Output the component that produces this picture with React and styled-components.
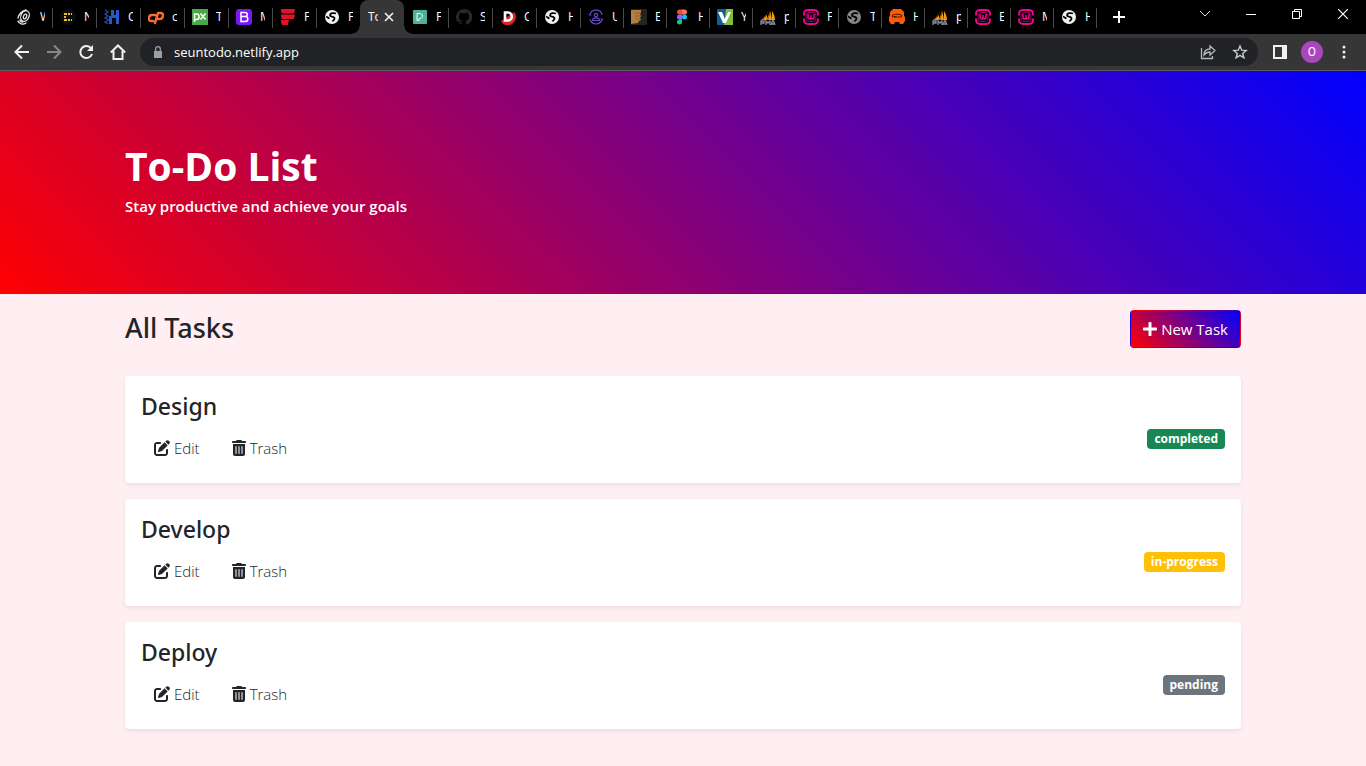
import React from "react";
import styled, { createGlobalStyle, css } from "styled-components";
import { FaPenToSquare, FaTrashCan } from "react-icons/fa6";
import { FaPlus } from "react-icons/fa";

const GlobalStyle = createGlobalStyle`
  *, *::before, *::after { box-sizing: border-box; }
  body {
    margin: 0;
    background: #ffeef2;
    color: #212529;
    font-family: "Segoe UI", "Open Sans", "Noto Sans", sans-serif;
    font-size: 16px;
    line-height: 24px;
  }
  button, input { font-family: inherit; }
  h1, h2, h3, p, ul { margin: 0; padding: 0; }
`;

const TabStrip = styled.div`
  display: flex;
  height: 34px;
  padding-left: 8px;
  background: #000;
`;

const Tab = styled.button`
  position: relative;
  display: flex;
  align-items: center;
  gap: 8px;
  flex: 0 0 ${(p) => (p.$narrow ? 43 : 44)}px;
  height: 34px;
  padding: 0 0 0 8px;
  border: 0;
  background: none;
  color: #fff;
  font-size: 12px;
  line-height: 16px;
  &::after {
    content: "";
    position: absolute;
    right: -1px;
    top: 8px;
    width: 1px;
    height: 20px;
    background: ${(p) => (p.$last ? "none" : "#4a4a4a")};
  }
  ${(p) =>
    p.$active &&
    css`
      z-index: 1;
      gap: 0;
      flex-basis: 44px;
      border-radius: 8px 8px 0 0;
      background: #363636;
      &::before,
      &::after {
        content: "";
        position: absolute;
        top: auto;
        bottom: 0;
        width: 8px;
        height: 8px;
      }
      &::before {
        left: -8px;
        background: radial-gradient(circle at 0 0, #000 7px, #363636 8px);
      }
      &::after {
        right: -8px;
        background: radial-gradient(circle at 100% 0, #000 7px, #363636 8px);
      }
    `}
`;

const TabText = styled.span`
  width: ${(p) => (p.$wide ? 10 : 5)}px;
  overflow: hidden;
  white-space: nowrap;
  text-align: left;
`;

const CloseIcon = styled.svg`
  margin-left: 6px;
`;

const Favicon = styled.svg`
  flex: none;
  width: 16px;
  height: 16px;
`;

const NewTab = styled.button`
  display: grid;
  place-items: center;
  width: 28px;
  margin-left: 9px;
  padding: 0;
  border: 0;
  background: none;
`;

const WindowControls = styled.div`
  display: flex;
  height: 28px;
  margin-left: auto;
`;

const WindowButton = styled.button`
  display: grid;
  place-items: center;
  width: 46px;
  padding: 0;
  border: 0;
  background: none;
`;

const Toolbar = styled.div`
  display: flex;
  align-items: center;
  height: 37px;
  padding: 0 6px;
  border-bottom: 1px solid #5c5c5c;
  background: #363636;
`;

const ToolButton = styled.button`
  display: grid;
  place-items: center;
  flex: none;
  width: 32px;
  height: 32px;
  padding: 0;
  border: 0;
  background: none;
`;

const AddressBar = styled.div`
  display: flex;
  align-items: center;
  flex: 1;
  height: 28px;
  margin: 0 6px;
  padding: 0 2px 0 12px;
  border-radius: 14px;
  background: #202225;
`;

const AddressInput = styled.input`
  flex: 1;
  min-width: 0;
  margin-left: 10px;
  padding: 0;
  border: 0;
  outline: 0;
  background: none;
  color: #fff;
  font-size: 13px;
  line-height: 20px;
`;

const Avatar = styled.span`
  display: grid;
  place-items: center;
  width: 22px;
  height: 22px;
  border-radius: 50%;
  background: #ab47bc;
  color: #fff;
  font-family: Roboto, sans-serif;
  font-size: 12px;
  line-height: 22px;
`;

const Container = styled.div`
  max-width: 1140px;
  margin: 0 auto;
  padding: 0 12px;
`;

const Hero = styled.header`
  padding: 71px 0 76px;
  background: linear-gradient(45deg, #f00, #00f);
  color: #fff;
`;

const HeroTitle = styled.h1`
  margin-bottom: 4px;
  font-size: 39px;
  font-weight: 700;
  line-height: 48px;
`;

const HeroText = styled.p`
  font-size: 15px;
  font-weight: 600;
  line-height: 24px;
`;

const SectionHead = styled.div`
  display: flex;
  justify-content: space-between;
  padding: 16px 0 28px;
`;

const SectionTitle = styled.h2`
  font-family: "Segoe UI", "Noto Sans", sans-serif;
  font-size: 27px;
  font-weight: 500;
  line-height: 36px;
`;

const Button = styled.button`
  display: inline-flex;
  align-items: center;
  gap: 4px;
  height: 38px;
  padding: 0 12px;
  border: 1px solid transparent;
  border-radius: 4px;
  background: none;
  color: #212529;
  font-size: 15px;
  font-weight: ${(p) => (p.$primary ? 400 : 300)};
  line-height: 24px;
  ${(p) =>
    p.$primary &&
    css`
      background: linear-gradient(45deg, #f00, #00f);
      color: #fff;
    `}
`;

const EditIcon = styled(FaPenToSquare)`
  width: 16px;
  height: 16px;
`;

const TrashIcon = styled(FaTrashCan)`
  width: 14px;
  height: 16px;
`;

const PlusIcon = styled(FaPlus)`
  width: 14px;
  height: 16px;
`;

const TaskList = styled.ul`
  display: flex;
  flex-direction: column;
  gap: 16px;
  padding-bottom: 16px;
  list-style: none;
`;

const TaskCard = styled.li`
  padding: 16px;
  border-radius: 4px;
  background: #fff;
  box-shadow: 0 2px 4px rgba(0, 0, 0, 0.075);
`;

const TaskName = styled.h3`
  margin-bottom: 8px;
  font-family: "Segoe UI", "Noto Sans", sans-serif;
  font-size: 23px;
  font-weight: 500;
  line-height: 29px;
`;

const TaskFooter = styled.div`
  display: flex;
  align-items: flex-start;
  justify-content: space-between;
`;

const Actions = styled.div`
  display: flex;
  gap: 6px;
`;

const badgeColors = {
  completed: "#198754",
  "in-progress": "#ffc107",
  pending: "#6c757d",
};

const Badge = styled.span`
  padding: 0 7px;
  border-radius: 4px;
  background: ${(p) => badgeColors[p.$status]};
  color: #fff;
  font-size: 12px;
  font-weight: 700;
  line-height: 20px;
`;

const globeMark = (
  <path
    d="M12 4.500C9.500 3.500 6 4.200 6 6.300S10.500 7 10.500 9.500C10.500 11 9 11.300 8.500 12.500M2 7.500c1.500.5 2 1.500 3.500 2"
    fill="none"
    stroke="#000"
    strokeWidth="1.800"
  />
);

const glyphs = {
  swirl: (
    <g fill="none" stroke="#e8e8e8" strokeWidth="1.300" strokeLinecap="round">
      <ellipse cx="9" cy="7" rx="4" ry="5.500" transform="rotate(25 9 7)" />
      <ellipse cx="9" cy="7.500" rx="1.500" ry="2.500" transform="rotate(25 9 7.500)" />
      <path d="M2 9c1-4 4-7 8-8M2 12c1 3 5 4 8 2M4 11c0 1 1 2 3 2" />
    </g>
  ),
  dots: (
    <>
      <circle cx="8" cy="8" r="8" fill="#0c0c0c" />
      <path d="M4 4h3v2H4zM8 4h2v2H8zM11 4h1v2h-1zM4 7h2v2H4zM4 10h3v2H4zM8 10h2v2H8zM11 10h1v2h-1z" fill="#f3ba2f" />
    </>
  ),
  hash: (
    <>
      <path d="M7 1h3v5h2V1h3v14h-3V9H8v6H5V7h2z" fill="#2858c8" />
      <path d="M1 1l3 2-3 2 3 2-3 2 4 2-4 2 3 2" fill="none" stroke="#2450a8" strokeWidth="1.3" />
    </>
  ),
  cpanel: (
    <g fill="none" stroke="#ff6c2c" strokeWidth="2.5" strokeLinecap="round" strokeLinejoin="round">
      <path d="M7 6H4C0 6-.5 12 3 12h2M7 14l3-10h3c3 0 2.500 6-1 6h-2" />
    </g>
  ),
  px: (
    <>
      <rect width="16" height="16" fill="#4aa84a" />
      <path d="M2.500 13V5h2c3.500 0 3.500 5.500 0 5.500h-2M8.500 4.500l5 6M13.500 4.500l-5 6" fill="none" stroke="#fff" strokeWidth="1.500" />
    </>
  ),
  bootstrap: (
    <>
      <rect width="16" height="16" rx="3" fill="#7b16f5" />
      <path d="M5 3.500h4c3 0 3 4 0 4H5zM5 7.500h4.500c3 0 3 5 0 5H5z" fill="none" stroke="#fff" strokeWidth="1.500" />
    </>
  ),
  bars: (
    <path d="M1 0h14l-1 4.500H3C1.500 4.500 1 3 1 0zM1 5.500h14l-1 4.500H3C1.500 10 1 9 1 5.500zM1 11h8l-1 5H3c-1.500 0-2-2-2-5z" fill="#e0122c" />
  ),
  globe: (
    <>
      <circle cx="8" cy="8" r="7" fill="#f1f3f4" />
      {globeMark}
    </>
  ),
  grayGlobe: (
    <>
      <circle cx="8" cy="8" r="7" fill="#858585" />
      {globeMark}
    </>
  ),
  teal: (
    <>
      <rect x="1" y="1" width="14" height="14" rx="1" fill="#4fb09c" />
      <path d="M5 4.500h2.500c4 0 4 5 0 5H7v2H5z" fill="none" stroke="#e8fff8" />
    </>
  ),
  github: (
    <path
      d="M8 0a8 8 0 0 0-2.500 15.600c.4.100.5-.2.500-.4V14c-2.200.5-2.700-1-2.700-1-.4-.9-.9-1.200-.9-1.200-.7-.5.1-.5.1-.5.800.1 1.200.8 1.200.8.700 1.200 1.900.9 2.300.7.100-.5.300-.9.500-1.100-1.800-.2-3.600-.9-3.600-4 0-.9.300-1.600.8-2.100-.1-.2-.4-1 .1-2.100 0 0 .7-.2 2.200.8a7.500 7.500 0 0 1 4 0c1.500-1 2.200-.8 2.200-.8.400 1.100.2 1.900.1 2.100.5.500.8 1.300.8 2.100 0 3.100-1.900 3.700-3.700 3.900.3.300.6.800.6 1.500v2.200c0 .2.100.5.500.4A8 8 0 0 0 8 0z"
      fill="#24292e"
    />
  ),
  redD: (
    <>
      <path d="M1 12l3-2 10-7c4 5 1 11-4 13-4 1-8-1-9-4z" fill="#dc2424" />
      <path d="M5 3.500h3c5 0 5 8 0 8H5z" fill="none" stroke="#fff" strokeWidth="2.600" />
    </>
  ),
  cycle: (
    <g fill="none" stroke="#6546c8" strokeWidth="1.200">
      <path d="M2 6C3-.5 13-.5 14 6M14 10.500c-2 6-10 6-12 0M.5 6h3M12.500 10h3" />
      <circle cx="8" cy="6" r="1.700" />
      <path d="M4.500 11.500c0-3.500 7-3.500 7 0z" />
    </g>
  ),
  fist: (
    <>
      <rect width="16" height="16" fill="#242424" />
      <path d="M0 1h10v3l-1 1 1 2-1 2 1 2-2 1-1 2-7 1z" fill="#b07f41" />
      <path d="M4 4h6M4 7h5M4 10h5" stroke="#795125" strokeWidth=".6" />
    </>
  ),
  figma: (
    <>
      <path d="M8 .5H5.500a2.500 2.500 0 0 0 0 5H8z" fill="#f24e1e" />
      <path d="M8 .5h2.500a2.500 2.500 0 0 1 0 5H8z" fill="#ff7262" />
      <path d="M8 5.500H5.500a2.500 2.500 0 0 0 0 5H8z" fill="#a259ff" />
      <circle cx="10.500" cy="8" r="2.500" fill="#1abcfe" />
      <path d="M8 10.500H5.500A2.500 2.500 0 1 0 8 13z" fill="#0acf83" />
    </>
  ),
  vee: (
    <>
      <path d="M0 0h16v16H0z" fill="#0c6098" />
      <path d="M9 0h7v16H7z" fill="#80bd3d" />
      <path d="M1 3h4l3 7 3-7h3L9 14H6z" fill="#fff" />
    </>
  ),
  sails: (
    <>
      <path d="M7 2c1 4-1 6-6 9h6zM10 0c1 5-1 8-3 11h5zM12 2c2 3 3 6 3 9h-3z" fill="#f89c0e" />
      <path d="M6 4c-1 3-2 5-5 7h3zM10 1c-1 4-2 7-4 10h3z" fill="#b56b28" />
      <path d="M1 16v-4h3v2H1M6 16v-4l2 2 2-2v4M11 16l1.500-4h1l1.500 4M12 15h2" fill="none" stroke="#8a8da8" strokeWidth="1.300" />
    </>
  ),
  wamp: (
    <g fill="none" stroke="#f70094">
      <path d="M1 6.500V5c0-3 1.500-4 4-4h6c2.500 0 4 1 4 4v1.500M1 9.500V11c0 3 1.500 4 4 4h6c2.500 0 4-1 4-4V9.500" strokeWidth="1.900" />
      <path d="M3 8c0-3 1-4.500 3-4.500h4c2 0 3 1.500 3 4.500s-1 4.500-3 4.500H6C4 12.500 3 11 3 8z" strokeWidth=".6" />
      <path d="M5 5v3c0 2.500 3 2.500 3 0V6v2c0 2.500 3 2.500 3 0V5" strokeWidth="1.500" />
    </g>
  ),
  mask: (
    <>
      <path d="M4 0h8l3 3v4l1 1v4l-2 3h-3l-1-2H6l-1 2H2l-2-3V8l1-1V3z" fill="#ff5a05" />
      <path d="M3.500 6c2-1 7-1 9 0v2h-9zM5 7.500h2" fill="none" stroke="#461800" />
    </>
  ),
};

const tabs = [
  ["swirl", "W"],
  ["dots", "N"],
  ["hash", "C"],
  ["cpanel", "c"],
  ["px", "T"],
  ["bootstrap", "M"],
  ["bars", "F"],
  ["globe", "F"],
  ["active", "To"],
  ["teal", "F"],
  ["github", "S"],
  ["redD", "C"],
  ["globe", "H"],
  ["cycle", "U"],
  ["fist", "E"],
  ["figma", "H"],
  ["vee", "Y"],
  ["sails", "p"],
  ["wamp", "F"],
  ["grayGlobe", "T"],
  ["mask", "H"],
  ["sails", "p"],
  ["wamp", "E"],
  ["wamp", "M"],
  ["globe", "H"],
];

const tasks = [
  { name: "Design", status: "completed" },
  { name: "Develop", status: "in-progress" },
  { name: "Deploy", status: "pending" },
];

function BrowserTab({ icon, label, index }) {
  if (icon === "active") {
    return (
      <Tab $active>
        <TabText $wide>{label}</TabText>
        <CloseIcon width="10" height="10" viewBox="0 0 10 10">
          <path d="M1 1l8 8M9 1L1 9" stroke="#f1f3f4" strokeWidth="1.600" />
        </CloseIcon>
      </Tab>
    );
  }
  return (
    <Tab $narrow={index > 12} $last={tabs[index + 1]?.[0] === "active"}>
      <Favicon viewBox="0 0 16 16">{glyphs[icon]}</Favicon>
      <TabText>{label}</TabText>
    </Tab>
  );
}

function BrowserChrome() {
  return (
    <>
      <TabStrip>
        {tabs.map(([icon, label], i) => (
          <BrowserTab key={i} icon={icon} label={label} index={i} />
        ))}
        <NewTab aria-label="New tab">
          <svg width="12" height="12" viewBox="0 0 12 12">
            <path d="M6 0v12M0 6h12" stroke="#fff" strokeWidth="2" />
          </svg>
        </NewTab>
        <WindowControls>
          <WindowButton aria-label="Search tabs">
            <svg width="12" height="8" viewBox="0 0 12 8" fill="none" stroke="#ddd">
              <path d="M1 1l5 5 5-5" />
            </svg>
          </WindowButton>
          <WindowButton aria-label="Minimize">
            <svg width="10" height="10" viewBox="0 0 10 10">
              <path d="M0 5.500h10" stroke="#fff" />
            </svg>
          </WindowButton>
          <WindowButton aria-label="Restore">
            <svg width="10" height="10" viewBox="0 0 10 10" fill="none" stroke="#fff">
              <path d="M.5 2.500h7v7h-7zM2.500 2.500v-2h7v7h-2" />
            </svg>
          </WindowButton>
          <WindowButton aria-label="Close">
            <svg width="10" height="10" viewBox="0 0 10 10">
              <path d="M0 0l10 10M10 0L0 10" stroke="#fff" strokeWidth="1.200" />
            </svg>
          </WindowButton>
        </WindowControls>
      </TabStrip>
      <Toolbar>
        <ToolButton aria-label="Back">
          <svg width="16" height="16" viewBox="0 0 16 16" fill="none" stroke="#f1f1f1" strokeWidth="2">
            <path d="M15 8H2M8 1.500L1.500 8 8 14.500" />
          </svg>
        </ToolButton>
        <ToolButton aria-label="Forward">
          <svg width="16" height="16" viewBox="0 0 16 16" fill="none" stroke="#888" strokeWidth="2">
            <path d="M1 8h13M8 1.500L14.500 8 8 14.500" />
          </svg>
        </ToolButton>
        <ToolButton aria-label="Reload">
          <svg width="16" height="16" viewBox="0 0 16 16">
            <path d="M13.200 4.500A6 6 0 1 0 14 10" fill="none" stroke="#f1f1f1" strokeWidth="2" />
            <path d="M15 1v6H9z" fill="#f1f1f1" />
          </svg>
        </ToolButton>
        <ToolButton aria-label="Home">
          <svg width="16" height="16" viewBox="0 0 16 16" fill="none" stroke="#f1f1f1" strokeWidth="2">
            <path d="M.8 8.500L8 1.500l7.200 7M3.500 7v8h9V7" />
          </svg>
        </ToolButton>
        <AddressBar>
          <svg width="12" height="12" viewBox="0 0 12 12">
            <path d="M2 5h8v7H2z" fill="#9aa0a6" />
            <path d="M3.700 5V3a2.300 2.300 0 0 1 4.600 0v2" fill="none" stroke="#9aa0a6" strokeWidth="1.300" />
          </svg>
          <AddressInput aria-label="Address" defaultValue="seuntodo.netlify.app" />
          <ToolButton aria-label="Share">
            <svg width="16" height="16" viewBox="0 0 16 16" fill="none" stroke="#b4b6b9" strokeWidth="1.300">
              <path d="M1.500 4v10.500h11V12M4 11c0-4 2-6 6-6V2l5 4.500-5 4.500V8C7 8 5.500 9 4 11z" />
            </svg>
          </ToolButton>
          <ToolButton aria-label="Bookmark">
            <svg width="16" height="16" viewBox="0 0 16 16" fill="none" stroke="#c8cacd" strokeWidth="1.400">
              <path d="M8 2l1.700 4.200 4.500.3-3.500 2.900 1.200 4.400L8 11.400l-3.900 2.400 1.200-4.400-3.500-2.900 4.500-.3z" />
            </svg>
          </ToolButton>
        </AddressBar>
        <ToolButton aria-label="Side panel">
          <svg width="14" height="14" viewBox="0 0 14 14">
            <path d="M0 0h14v14H0zM2 2v10h7V2z" fill="#f1f1f1" fillRule="evenodd" />
          </svg>
        </ToolButton>
        <ToolButton aria-label="Profile">
          <Avatar>O</Avatar>
        </ToolButton>
        <ToolButton aria-label="Menu">
          <svg width="4" height="14" viewBox="0 0 4 14" fill="#f1f1f1">
            <circle cx="2" cy="2" r="1.500" />
            <circle cx="2" cy="7" r="1.500" />
            <circle cx="2" cy="12" r="1.500" />
          </svg>
        </ToolButton>
      </Toolbar>
    </>
  );
}

function Task({ name, status }) {
  return (
    <TaskCard>
      <TaskName>{name}</TaskName>
      <TaskFooter>
        <Actions>
          <Button>
            <EditIcon />
            Edit
          </Button>
          <Button>
            <TrashIcon />
            Trash
          </Button>
        </Actions>
        <Badge $status={status}>{status}</Badge>
      </TaskFooter>
    </TaskCard>
  );
}

export default function App() {
  return (
    <>
      <GlobalStyle />
      <BrowserChrome />
      <Hero>
        <Container>
          <HeroTitle>To-Do List</HeroTitle>
          <HeroText>Stay productive and achieve your goals</HeroText>
        </Container>
      </Hero>
      <Container as="main">
        <SectionHead>
          <SectionTitle>All Tasks</SectionTitle>
          <Button $primary>
            <PlusIcon />
            New Task
          </Button>
        </SectionHead>
        <TaskList>
          {tasks.map((task) => (
            <Task key={task.name} {...task} />
          ))}
        </TaskList>
      </Container>
    </>
  );
}
